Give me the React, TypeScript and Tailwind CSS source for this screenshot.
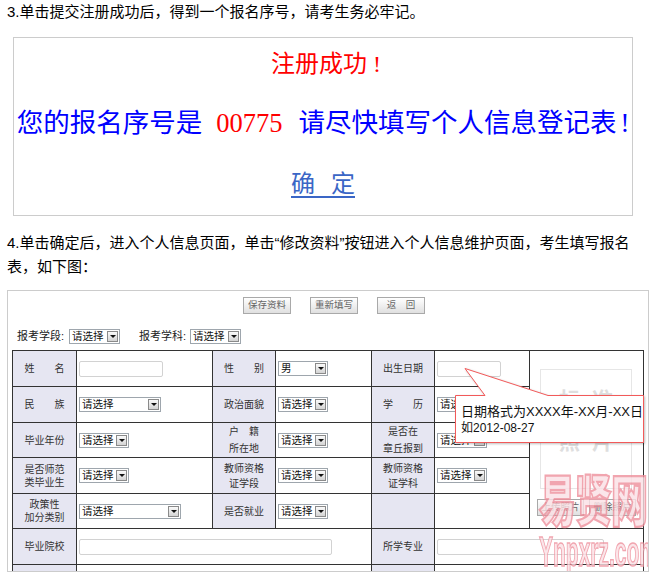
import React from 'react';

const cjk = "font-['Liberation_Sans','Noto_Sans_CJK_SC',sans-serif]";

function Select({ w, text = '请选择' }: { w: string; text?: string }) {
  return (
    <div className={`flex items-center h-[15px] border border-[#9ea6ad] bg-white ${w}`}>
      <span className="pl-[2px] text-[10.5px] leading-none text-[#111] whitespace-nowrap">{text}</span>
      <span className="ml-auto mr-[1px] w-[11px] h-[11px] border border-[#8a8a8a] bg-linear-to-b from-[#fafafa] to-[#d4d4d4] flex items-center justify-center">
        <span className="w-0 h-0 border-l-[3px] border-r-[3px] border-t-[3px] border-l-transparent border-r-transparent border-t-[#111]" />
      </span>
    </div>
  );
}

function Input({ w }: { w: string }) {
  return <div className={`h-[16px] border border-[#d2d2d2] rounded-[2px] bg-white ${w}`} />;
}

function Btn({ children, w = 'w-[48px]' }: { children: React.ReactNode; w?: string }) {
  return (
    <div className={`h-[17px] ${w} border border-[#a9a9a9] bg-linear-to-b from-white to-[#e0e0e0] flex items-center justify-center text-[9.5px] text-[#666] whitespace-nowrap`}>
      {children}
    </div>
  );
}

function Lbl({ children, lh = 'leading-[13px]' }: { children?: React.ReactNode; lh?: string }) {
  return (
    <td className={`bg-[#e6e6f2] border border-[#333] text-center align-middle text-[10px] text-[#333] p-0 ${lh}`}>
      {children}
    </td>
  );
}

function Val({ children, colSpan }: { children?: React.ReactNode; colSpan?: number }) {
  return (
    <td colSpan={colSpan} className="border border-[#333] align-middle px-[2px] py-0">
      {children}
    </td>
  );
}

// two characters pushed apart, as in "姓　　名"
function Spread({ a, b }: { a: string; b: string }) {
  return (
    <div className="flex justify-center gap-[20px]">
      <span>{a}</span>
      <span>{b}</span>
    </div>
  );
}

export default function App() {
  return (
    <div className={`w-[653px] h-[576px] overflow-hidden bg-white text-black px-[7px] ${cjk}`}>
      <div className="text-[15px] leading-[24px] whitespace-nowrap">
        3.单击提交注册成功后，得到一个报名序号，请考生务必牢记。
      </div>

      {/* success notice */}
      <div className="mt-[13px] ml-[6px] w-[620px] h-[179px] border border-[#cccccc] flex flex-col items-center">
        <div className="h-[52px] flex items-center text-[24px] text-[#ff0000] pl-[6px]">
          注册成功<span className="ml-[6px] font-['Liberation_Serif',serif]">!</span>
        </div>
        <div className="h-[68px] flex items-center text-[26.5px] text-[#0000ff] whitespace-nowrap">
          您的报名序号是
          <span className="ml-[14px] mr-[16px] text-[#ff0000] font-['Liberation_Serif',serif]">00775</span>
          请尽快填写个人信息登记表
          <span className="ml-[4px] font-['Liberation_Serif',serif]">!</span>
        </div>
        <div className="h-[52px] flex items-center">
          <a className="text-[24px] text-[#3a66c6] underline underline-offset-[4px]">
            <span className="tracking-[16px]">确</span>定
          </a>
        </div>
      </div>

      <div className="mt-[15px] text-[15px] leading-[24px] whitespace-nowrap">
        <div>4.单击确定后，进入个人信息页面，单击“修改资料”按钮进入个人信息维护页面，考生填写报名</div>
        <div>表，如下图：</div>
      </div>

      {/* form screenshot */}
      <div className="relative mt-[11px] w-[642px] h-[282px] border border-[#cccccc] overflow-hidden">
        <div className="pt-[6px] pl-[235px] flex gap-[19px]">
          <Btn>保存资料</Btn>
          <Btn>重新填写</Btn>
          <Btn>返　回</Btn>
        </div>

        <div className="mt-[15px] h-[15px] flex items-center pl-[9px] text-[11px] text-[#222]">
          <span className="w-[52px] whitespace-nowrap">报考学段:</span>
          <Select w="w-[51px]" />
          <span className="ml-[19px] w-[51px] whitespace-nowrap">报考学科:</span>
          <Select w="w-[51px]" />
        </div>

        <div className="mt-[6px] pl-[4px]">
          <table className="border-collapse table-fixed w-[631px]">
            <colgroup>
              <col className="w-[64px]" />
              <col className="w-[136px]" />
              <col className="w-[63px]" />
              <col className="w-[96px]" />
              <col className="w-[63px]" />
              <col className="w-[95px]" />
              <col className="w-[114px]" />
            </colgroup>
            <tbody>
              <tr className="h-[36px]">
                <Lbl><Spread a="姓" b="名" /></Lbl>
                <Val><Input w="w-[84px]" /></Val>
                <Lbl><Spread a="性" b="别" /></Lbl>
                <Val><Select w="w-[50px]" text="男" /></Val>
                <Lbl>出生日期</Lbl>
                <Val><Input w="w-[64px]" /></Val>
                <td rowSpan={5} className="border border-[#333] align-top p-0">
                  <div className="pt-[18px] pl-[10px]">
                    <div className="w-[92px] h-[120px] border border-[#e6e6e6] flex flex-col items-center pt-[18px] gap-[18px] text-[21px] leading-[24px] text-[#dedede] font-bold">
                      <div className="flex gap-[12px]"><span>标</span><span>准</span></div>
                      <div className="flex gap-[12px]"><span>照</span><span>片</span></div>
                    </div>
                  </div>
                  <div className="mt-[10px] pl-[7px] flex gap-[5px]">
                    <Btn w="w-[47px]">上传照片</Btn>
                    <Btn w="w-[47px]">删除照片</Btn>
                  </div>
                </td>
              </tr>
              <tr className="h-[36px]">
                <Lbl><Spread a="民" b="族" /></Lbl>
                <Val><Select w="w-[82px]" /></Val>
                <Lbl>政治面貌</Lbl>
                <Val><Select w="w-[50px]" /></Val>
                <Lbl><Spread a="学" b="历" /></Lbl>
                <Val><Select w="w-[50px]" /></Val>
              </tr>
              <tr className="h-[35px]">
                <Lbl>毕业年份</Lbl>
                <Val><Select w="w-[50px]" /></Val>
                <Lbl lh="leading-[17px]">户　籍<br />所在地</Lbl>
                <Val><Select w="w-[50px]" /></Val>
                <Lbl lh="leading-[17px]">是否在<br />章丘报到</Lbl>
                <Val><Select w="w-[50px]" /></Val>
              </tr>
              <tr className="h-[36px]">
                <Lbl>是否师范<br />类毕业生</Lbl>
                <Val><Select w="w-[50px]" /></Val>
                <Lbl lh="leading-[15px]">教师资格<br />证学段</Lbl>
                <Val><Select w="w-[50px]" /></Val>
                <Lbl lh="leading-[15px]">教师资格<br />证学科</Lbl>
                <Val><Select w="w-[50px]" /></Val>
              </tr>
              <tr className="h-[35px]">
                <Lbl>政策性<br />加分类别</Lbl>
                <Val><Select w="w-[102px]" /></Val>
                <Lbl>是否就业</Lbl>
                <Val><Select w="w-[50px]" /></Val>
                <Lbl />
                <Val />
              </tr>
              <tr className="h-[36px]">
                <Lbl>毕业院校</Lbl>
                <Val colSpan={3}><Input w="w-[253px]" /></Val>
                <Lbl>所学专业</Lbl>
                <Val colSpan={2}><Input w="w-[167px]" /></Val>
              </tr>
              <tr className="h-[30px]">
                <Lbl />
                <Val colSpan={3} />
                <Lbl />
                <Val colSpan={2} />
              </tr>
            </tbody>
          </table>
        </div>

        {/* date hint bubble */}
        <svg
          className="absolute left-[446px] top-[76px] drop-shadow-[1px_1px_1px_rgba(0,0,0,0.25)]"
          width="192"
          height="78"
          viewBox="0 0 192 78"
        >
          <path d="M1.5 28.5 H31 L11 1.5 L94 28.5 H189.5 V75.5 H1.5 Z" fill="#fff" stroke="#f25a5a" strokeWidth="1" />
        </svg>
        <div className="absolute left-[453px] top-[112px] leading-[17px] whitespace-nowrap text-[#111]">
          <div className="text-[13px]">日期格式为XXXX年-XX月-XX日</div>
          <div className="text-[12px]">如2012-08-27</div>
        </div>

        {/* site watermark */}
        <div className="absolute left-[531px] top-[180px] w-[112px] opacity-80 pointer-events-none text-[#fbe1e5] [-webkit-text-stroke:1.5px_#ee8f9c]">
          <div className="h-[64px] flex items-center">
            <span className="inline-block origin-center scale-y-[1.5] text-[37px] leading-[40px] font-black tracking-[-1px] whitespace-nowrap">易贤网</span>
          </div>
          <div className="h-[34px] flex items-start">
            <span className="inline-block origin-left scale-x-[0.5] text-[42px] leading-[34px] font-bold whitespace-nowrap">Ynpxrz.com</span>
          </div>
        </div>
      </div>
    </div>
  );
}
